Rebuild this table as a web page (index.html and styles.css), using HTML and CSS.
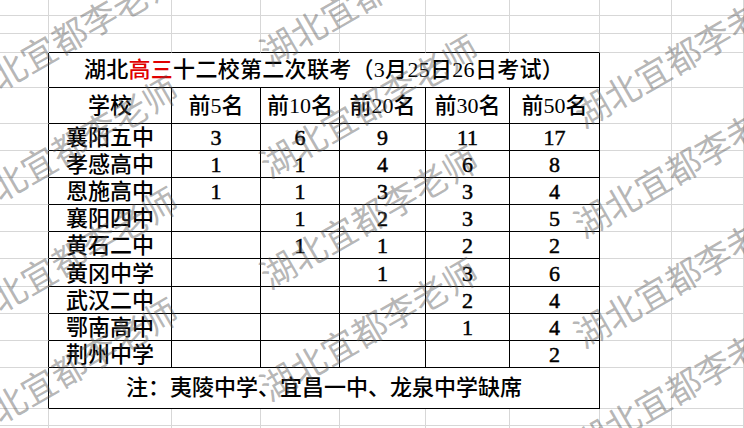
FILE: index.html
```html
<!DOCTYPE html>
<html lang="zh-CN">
<head>
<meta charset="utf-8">
<title>湖北高三十二校第二次联考</title>
<link rel="stylesheet" href="styles.css">
</head>
<body>
<div class="page">
<table class="sheet">
  <colgroup>
    <col class="c-a"><col class="c-b"><col class="c-c"><col class="c-d"><col class="c-e"><col class="c-f"><col class="c-g"><col class="c-h"><col class="c-i">
  </colgroup>
  <tbody>
    <tr class="r16"><td></td><td></td><td></td><td></td><td></td><td></td><td></td><td></td><td></td></tr>
    <tr class="r18"><td></td><td></td><td></td><td></td><td></td><td></td><td></td><td></td><td></td></tr>
    <tr class="r19"><td></td><td class="tb"></td><td class="tb"></td><td class="tb"></td><td class="tb"></td><td class="tb"></td><td class="tb"></td><td></td><td></td></tr>
    <tr class="r35"><td class="lb"></td><td class="x title" colspan="6">湖北<span class="red">高三</span>十二校第二次联考（3月25日26日考试）</td><td></td><td></td></tr>
    <tr class="r36 head"><td class="lb"></td><td class="x">学校</td><td class="x">前5名</td><td class="x">前10名</td><td class="x">前20名</td><td class="x">前30名</td><td class="x">前50名</td><td></td><td></td></tr>
    <tr class="r27 row"><td class="lb"></td><td class="x">襄阳五中</td><td class="x n">3</td><td class="x n">6</td><td class="x n">9</td><td class="x n">11</td><td class="x n">17</td><td></td><td></td></tr>
    <tr class="r27 row"><td class="lb"></td><td class="x">孝感高中</td><td class="x n">1</td><td class="x n">1</td><td class="x n">4</td><td class="x n">6</td><td class="x n">8</td><td></td><td></td></tr>
    <tr class="r27 row"><td class="lb"></td><td class="x">恩施高中</td><td class="x n">1</td><td class="x n">1</td><td class="x n">3</td><td class="x n">3</td><td class="x n">4</td><td></td><td></td></tr>
    <tr class="r27 row"><td class="lb"></td><td class="x">襄阳四中</td><td class="x n"></td><td class="x n">1</td><td class="x n">2</td><td class="x n">3</td><td class="x n">5</td><td></td><td></td></tr>
    <tr class="r27 row"><td class="lb"></td><td class="x">黄石二中</td><td class="x n"></td><td class="x n">1</td><td class="x n">1</td><td class="x n">2</td><td class="x n">2</td><td></td><td></td></tr>
    <tr class="r28 row"><td class="lb"></td><td class="x">黄冈中学</td><td class="x n"></td><td class="x n"></td><td class="x n">1</td><td class="x n">3</td><td class="x n">6</td><td></td><td></td></tr>
    <tr class="r27 row"><td class="lb"></td><td class="x">武汉二中</td><td class="x n"></td><td class="x n"></td><td class="x n"></td><td class="x n">2</td><td class="x n">4</td><td></td><td></td></tr>
    <tr class="r27 row"><td class="lb"></td><td class="x">鄂南高中</td><td class="x n"></td><td class="x n"></td><td class="x n"></td><td class="x n">1</td><td class="x n">4</td><td></td><td></td></tr>
    <tr class="r27 row"><td class="lb"></td><td class="x">荆州中学</td><td class="x n"></td><td class="x n"></td><td class="x n"></td><td class="x n"></td><td class="x n">2</td><td></td><td></td></tr>
    <tr class="r41"><td class="lb"></td><td class="x note" colspan="6">注：夷陵中学、宜昌一中、龙泉中学缺席</td><td></td><td></td></tr>
    <tr class="r17"><td></td><td></td><td></td><td></td><td></td><td></td><td></td><td></td><td></td></tr>
    <tr class="r17"><td></td><td></td><td></td><td></td><td></td><td></td><td></td><td></td><td></td></tr>
  </tbody>
</table>

<div class="watermarks" aria-hidden="true">
  <span class="wm w-l1">湖北宜都李老师</span>
  <span class="wm w-l2">湖北宜都李老师</span>
  <span class="wm w-l3">湖北宜都李老师</span>
  <span class="wm w-l4">湖北宜都李老师</span>
  <span class="wm w-c1">湖北宜都李老师</span>
  <span class="wm w-c2">湖北宜都李老师</span>
  <span class="wm w-c3">湖北宜都李老师</span>
  <span class="wm w-c4">湖北宜都李老师</span>
  <span class="wm w-r1">湖北宜都李老师</span>
  <span class="wm w-r2">湖北宜都李老师</span>
  <span class="wm w-r3">湖北宜都李老师</span>
  <span class="wm w-r4">湖北宜都李老师</span>
</div>
</div>
</body>
</html>
```

FILE: styles.css
```css
html, body {
  margin: 0;
  padding: 0;
  background: #ffffff;
  overflow: hidden;
}

.page {
  position: relative;
  width: 744px;
  height: 428px;
  overflow: hidden;
}

.sheet {
  border-collapse: separate;
  border-spacing: 0;
  table-layout: fixed;
  width: 744px;
  font-family: "Liberation Serif", "Noto Sans CJK SC", serif;
  font-size: 22px;
  font-weight: 500;
  line-height: 22px;
  color: #000;
}

.c-a { width: 49px; }
.c-b { width: 123px; }
.c-c { width: 89px; }
.c-d { width: 79px; }
.c-e { width: 86px; }
.c-f { width: 84px; }
.c-g { width: 90px; }
.c-h { width: 72px; }
.c-i { width: 72px; }

.sheet td {
  box-sizing: border-box;
  padding: 0;
  border-right: 1px solid #d7d7d7;
  border-bottom: 1px solid #d7d7d7;
  text-align: center;
  vertical-align: middle;
  white-space: nowrap;
  overflow: hidden;
}

.r16 { height: 16px; }
.r17 { height: 17px; }
.r18 { height: 18px; }
.r19 { height: 19px; }
.r27 { height: 27px; }
.r28 { height: 28px; }
.r35 { height: 35px; }
.r36 { height: 36px; }
.r41 { height: 41px; }

.sheet td.tb { border-bottom-color: #000; }
.sheet td.lb { border-right-color: #000; }
.sheet td.x {
  border-right-color: #000;
  border-bottom-color: #000;
}

.row td { vertical-align: bottom; padding-bottom: 1px; }
.row td.n {
  font-weight: 400;
  -webkit-text-stroke: 0.5px #000;
}

.title { letter-spacing: 0.3px; }
.title .red { color: #e00000; }

.watermarks {
  position: absolute;
  inset: 0;
  pointer-events: none;
  overflow: hidden;
}

.wm {
  position: absolute;
  display: block;
  font-family: "Noto Sans CJK SC", sans-serif;
  font-size: 35px;
  font-weight: 400;
  line-height: 35px;
  white-space: nowrap;
  color: rgba(80, 80, 80, 0.42);
  transform-origin: 0 50%;
  transform: rotate(-30deg);
  margin-top: -17px;
}

.w-l1 { left: -38px; top: 95px; }
.w-l2 { left: -38px; top: 206px; }
.w-l3 { left: -38px; top: 317px; }
.w-l4 { left: -38px; top: 428px; }

.w-c1 { left: 262px; top: 53px; }
.w-c2 { left: 262px; top: 165px; }
.w-c3 { left: 262px; top: 276px; }
.w-c4 { left: 262px; top: 388px; }

.w-r1 { left: 576px; top: 115px; }
.w-r2 { left: 576px; top: 225px; }
.w-r3 { left: 576px; top: 335px; }
.w-r4 { left: 576px; top: 445px; }
```
